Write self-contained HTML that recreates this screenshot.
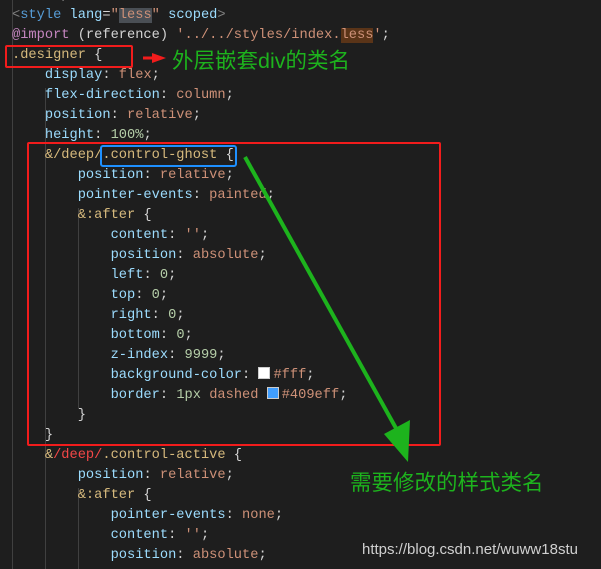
<!DOCTYPE html>
<html><head><meta charset="utf-8"><style>
body{margin:0;width:601px;height:569px;background:#1e1e1e;overflow:hidden;position:relative;font-family:"Liberation Mono",monospace;font-size:13.7px}
.l{position:absolute;left:12px;height:20px;line-height:20px;white-space:pre;color:#d4d4d4}
.p{color:#9cdcfe}.v{color:#ce9178}.n{color:#b5cea8}.s{color:#d7ba7d}.g{color:#808080}.t{color:#569cd6}.k{color:#c586c0}.r{color:#f44747}
.guide{position:absolute;width:1px;background:#404040}
.box{position:absolute;border:2px solid #f21c1c;border-radius:2px}
.cn{position:absolute;font-family:"Liberation Sans","Noto Sans CJK SC",sans-serif;color:#1db31d;font-size:21.5px;white-space:nowrap}
.sw{display:inline-block;width:10px;height:10px;border:1px solid #ccc;vertical-align:-1px;margin-right:3px}
</style></head><body>
<div class="guide" style="left:12px;top:0;height:569px"></div>
<div class="guide" style="left:45px;top:88px;height:481px"></div>
<div class="guide" style="left:78px;top:208px;height:200px"></div>
<div class="guide" style="left:78px;top:488px;height:81px"></div>
<div class="l g" style="top:-14px">&lt;/script&gt;</div>
<div class="l" style="top:6px"><span class="g">&lt;</span><span class="t">style</span> <span class="p">lang</span>=<span class="v">"<span style="background:#4a4f55">less</span>"</span> <span class="p">scoped</span><span class="g">&gt;</span></div>
<div class="l" style="top:26px"><span class="k">@import</span> (reference) <span class="v">'../../styles/index.<span style="background:#5a3418">less</span>'</span>;</div>
<div class="l s" style="top:46px">.designer <span style="color:#d4d4d4">{</span></div>
<div class="l" style="top:66px">    <span class="p">display</span>: <span class="v">flex</span>;</div>
<div class="l" style="top:86px">    <span class="p">flex-direction</span>: <span class="v">column</span>;</div>
<div class="l" style="top:106px">    <span class="p">position</span>: <span class="v">relative</span>;</div>
<div class="l" style="top:126px">    <span class="p">height</span>: <span class="n">100%</span>;</div>
<div class="l" style="top:146px">    <span class="s">&amp;/deep/.control-ghost</span> {</div>
<div class="l" style="top:166px">        <span class="p">position</span>: <span class="v">relative</span>;</div>
<div class="l" style="top:186px">        <span class="p">pointer-events</span>: <span class="v">painted</span>;</div>
<div class="l" style="top:206px">        <span class="s">&amp;:after</span> {</div>
<div class="l" style="top:226px">            <span class="p">content</span>: <span class="v">''</span>;</div>
<div class="l" style="top:246px">            <span class="p">position</span>: <span class="v">absolute</span>;</div>
<div class="l" style="top:266px">            <span class="p">left</span>: <span class="n">0</span>;</div>
<div class="l" style="top:286px">            <span class="p">top</span>: <span class="n">0</span>;</div>
<div class="l" style="top:306px">            <span class="p">right</span>: <span class="n">0</span>;</div>
<div class="l" style="top:326px">            <span class="p">bottom</span>: <span class="n">0</span>;</div>
<div class="l" style="top:346px">            <span class="p">z-index</span>: <span class="n">9999</span>;</div>
<div class="l" style="top:366px">            <span class="p">background-color</span>: <span class="sw" style="background:#fff"></span><span class="v">#fff</span>;</div>
<div class="l" style="top:386px">            <span class="p">border</span>: <span class="n">1px</span> <span class="v">dashed</span> <span class="sw" style="background:#409eff"></span><span class="v">#409eff</span>;</div>
<div class="l" style="top:406px">        }</div>
<div class="l" style="top:426px">    }</div>
<div class="l" style="top:446px">    <span class="s">&amp;<span class="r">/deep/</span>.control-active</span> {</div>
<div class="l" style="top:466px">        <span class="p">position</span>: <span class="v">relative</span>;</div>
<div class="l" style="top:486px">        <span class="s">&amp;:after</span> {</div>
<div class="l" style="top:506px">            <span class="p">pointer-events</span>: <span class="v">none</span>;</div>
<div class="l" style="top:526px">            <span class="p">content</span>: <span class="v">''</span>;</div>
<div class="l" style="top:546px">            <span class="p">position</span>: <span class="v">absolute</span>;</div>
<div class="box" style="left:5px;top:45px;width:124px;height:19px"></div>
<div class="box" style="left:27px;top:142px;width:410px;height:300px"></div>
<div style="position:absolute;left:100px;top:145px;width:133px;height:18px;border:2px solid #1e90ff;border-radius:3px"></div>
<svg style="position:absolute;left:0;top:0" width="601" height="569">
<line x1="143" y1="58" x2="155" y2="58" stroke="#f21c1c" stroke-width="3"/>
<polygon points="152,53 166,58 152,63" fill="#f21c1c"/>
<line x1="245" y1="157" x2="397" y2="430" stroke="#1db31d" stroke-width="4"/>
<polygon points="384,434 410,420 408,462" fill="#1db31d"/>
</svg>
<div class="cn" style="left:172px;top:44px">外层嵌套div的类名</div>
<div class="cn" style="left:350px;top:466px">需要修改的样式类名</div>
<div style="position:absolute;left:362px;top:541px;font-family:'Liberation Sans',sans-serif;font-size:15px;color:#d0d0d0">https://blog.csdn.net/wuww18stu</div>
</body></html>
